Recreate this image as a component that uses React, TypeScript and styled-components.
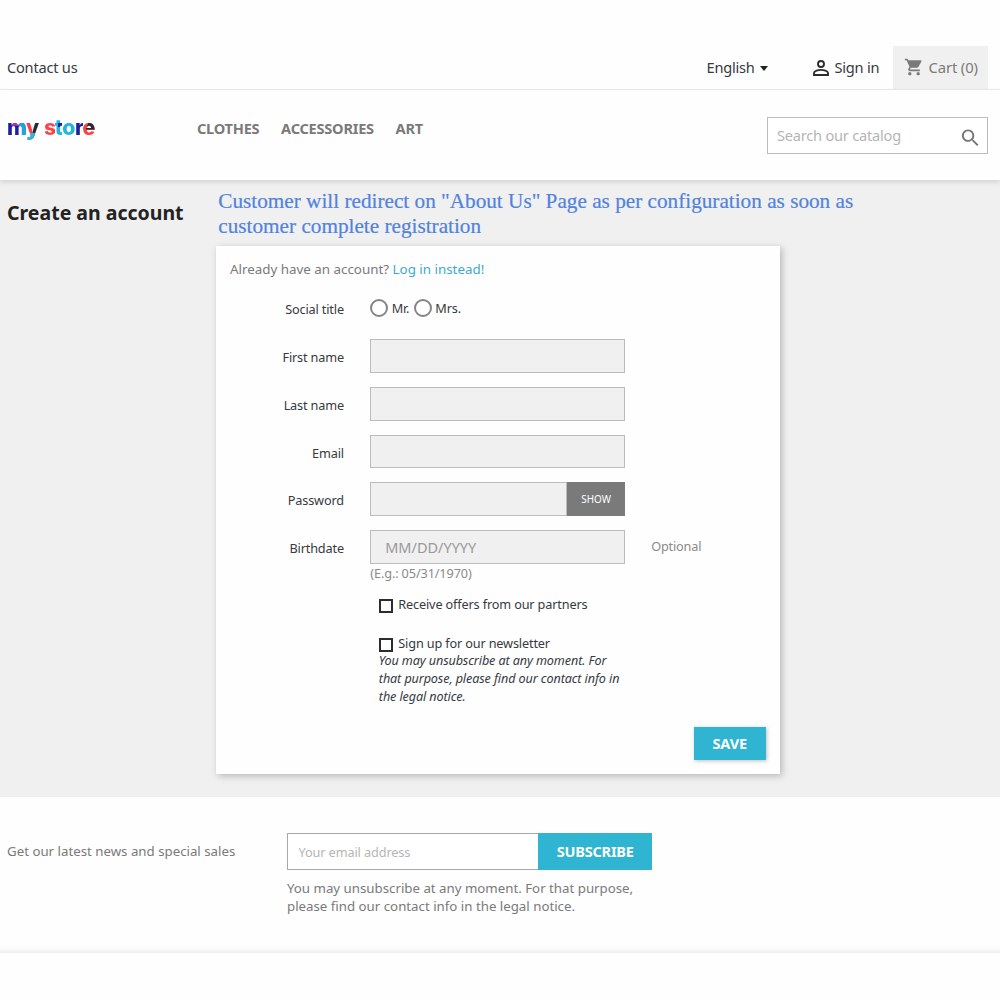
import React from 'react';
import styled, { createGlobalStyle } from 'styled-components';

const Global = createGlobalStyle`
  *, *::before, *::after { box-sizing: border-box; }
  body { margin: 0; background: #fff; font-family: "Noto Sans", "Open Sans", sans-serif; color: #363a41; }
  input, button { font-family: inherit; margin: 0; border-radius: 0; outline: none; }
`;

const Page = styled.div`
  height: 1000px;
  overflow: hidden;
  padding-top: 46px;
  background: #fefefe;
`;

const NavBar = styled.nav`
  display: flex;
  align-items: stretch;
  height: 44px;
  padding: 0 12px 0 7px;
  border-bottom: 1px solid #ebebeb;
  font-size: 14.6px;
  letter-spacing: -0.22px;
  line-height: 43px;
`;

const ContactLink = styled.a`
  flex: 1;
`;

const Language = styled.div`
  display: flex;
  align-items: center;
  gap: 5px;
  width: 106px;
`;

const Caret = styled.span`
  border: 4.5px solid transparent;
  border-top: 5px solid #232323;
  border-bottom: 0;
  margin-top: 2px;
`;

const SignIn = styled.a`
  display: flex;
  align-items: center;
  gap: 6px;
  width: 80.5px;
`;

const Cart = styled.div`
  display: flex;
  align-items: center;
  gap: 4.5px;
  width: 95px;
  padding: 0 0 1px 11px;
  background: #f0f0f0;
  color: #7a7a7a;
  font-size: 14.8px;
  letter-spacing: -0.12px;
`;

const Header = styled.header`
  position: relative;
  display: flex;
  height: 90px;
  padding: 27px 12px 0 7px;
  background: #fefefe;
  box-shadow: 0 2px 5px rgba(0, 0, 0, 0.13);
`;

const Logo = styled.a`
  display: flex;
  width: 190px;
  height: 32px;
  margin-top: -6px;
  font-family: Inter, sans-serif;
  font-weight: 800;
  font-size: 21.3px;
  line-height: 33px;
`;

const LogoLetter = styled.span<{ $w: number; $fill: string }>`
  width: ${p => p.$w}px;
  background: ${p => p.$fill};
  background-clip: text;
  -webkit-background-clip: text;
  color: transparent;
`;

const Menu = styled.div`
  display: flex;
  flex: 1;
  gap: 21.7px;
  color: #7a7a7a;
  font-size: 14.6px;
  font-weight: 700;
  letter-spacing: -0.25px;
  line-height: 22px;
`;

const SearchBox = styled.div`
  display: flex;
  align-items: center;
  justify-content: space-between;
  width: 221px;
  height: 37px;
  padding: 0 8px 0 9px;
  border: 1px solid #bdbdbd;
  background: #fff;

  svg { margin-top: 4px; }
`;

const SearchInput = styled.input`
  width: 160px;
  margin-top: -2px;
  padding: 0;
  border: 0;
  background: transparent;
  font-size: 14.6px;
  letter-spacing: -0.22px;
  line-height: 20px;
  &::placeholder { color: #b5b5b5; opacity: 1; }
`;

const Main = styled.main`
  display: flex;
  height: 617px;
  padding: 8px 7px 0;
  background: #f0f0f0;
`;

const Title = styled.h1`
  width: 208.5px;
  margin: 12px 0 0;
  color: #232323;
  font-size: 19.5px;
  font-weight: 700;
  line-height: 26px;
  white-space: nowrap;
`;

const Content = styled.section`
  width: 660px;
`;

const Notice = styled.p`
  margin: 1px 0 6.6px;
  padding-left: 2.8px;
  color: #5082de;
  -webkit-text-stroke: 0.2px #5082de;
  font-family: "Liberation Serif", serif;
  font-size: 21.22px;
  line-height: 25px;
  white-space: nowrap;
`;

const Card = styled.form`
  display: flex;
  flex-direction: column;
  width: 564.7px;
  height: 528.8px;
  padding: 13.8px 14.5px 14px;
  background: #fefefe;
  box-shadow: 2px 2px 7px rgba(0, 0, 0, 0.24);
`;

const LoginLine = styled.p`
  margin: 0 0 12px;
  color: #7a7a7a;
  font-size: 13.37px;
  line-height: 20px;
  a { color: #3fabca; }
`;

const Row = styled.div`
  display: grid;
  grid-template-columns: 113.9px 254.7px 1fr;
  column-gap: 26.3px;
  height: 33.75px;
  margin-bottom: 14px;
  font-size: 12.7px;
  letter-spacing: -0.16px;
  line-height: 36px;
`;

const Label = styled.label`
  color: #363a41;
  text-align: right;
`;

const Field = styled.div`
  display: flex;
  height: 33.75px;
`;

const Input = styled.input`
  flex: 1;
  min-width: 0;
  padding: 0 14px;
  border: 1px solid #bbb;
  background: #f0f0f0;
  font-size: 14.5px;
  &::placeholder { color: #999; opacity: 1; }
`;

const ShowButton = styled.button`
  width: 57.5px;
  padding: 0 0 1px;
  border: 0;
  background: #7a7a7a;
  color: #fff;
  font-size: 9.9px;
`;

const Remark = styled.span`
  color: #8a8a8a;
  line-height: 32px;
`;

const Hint = styled.div`
  margin: -14.400px 0 0 140.300px;
  color: #8a8a8a;
  font-size: 12.7px;
  letter-spacing: -0.12px;
  line-height: 18px;
`;

const Radios = styled.div`
  display: flex;
  height: 33.75px;
  gap: 4.5px;
`;

const RadioLabel = styled.label`
  display: flex;
  align-items: center;
  gap: 3.5px;
  line-height: 32px;
  span { margin-top: -1px; }
`;

const Circle = styled.i`
  width: 18px;
  height: 18px;
  border: 2px solid #858585;
  border-radius: 50%;
  background: #fff;
`;

const Option = styled.label<{ $top: number }>`
  display: flex;
  gap: 5.5px;
  margin: ${p => p.$top}px 0 0 148.8px;
  font-size: 12.7px;
  letter-spacing: -0.15px;
  line-height: 18px;
`;

const Box = styled.i`
  width: 14px;
  height: 14px;
  margin-top: 3.500px;
  border: 2px solid #2c2c2c;
  background: #fff;
`;

const Small = styled.em`
  width: 260px;
  margin-left: 148.8px;
  font-size: 12.6px;
  letter-spacing: -0.1px;
  line-height: 17.7px;
`;

const SaveButton = styled.button`
  align-self: flex-end;
  width: 72px;
  height: 33.500px;
  margin-top: auto;
  padding: 0 0 1px;
  border: 0;
  background: #2fb5d2;
  box-shadow: 1px 1px 4px rgba(0, 0, 0, 0.25);
  color: #fff;
  font-size: 14.5px;
  font-weight: 700;
  letter-spacing: -0.15px;
`;

const Newsletter = styled.footer`
  display: grid;
  grid-template-columns: 280px 380px;
  height: 156px;
  padding: 36px 7px 0;
  background: linear-gradient(#fefefe calc(100% - 9px), #fafafa calc(100% - 4px), #eeeeee);
  color: #7a7a7a;
  font-size: 13.27px;
  line-height: 18px;
`;

const NewsTitle = styled.p`
  margin: 8.6px 0 0;
`;

const SubscribeRow = styled.div`
  display: flex;
  width: 365.4px;
  height: 37px;
`;

const EmailInput = styled.input`
  flex: 1;
  min-width: 0;
  padding: 1px 10.5px 0;
  border: 1px solid #a8a8a8;
  border-right: 0;
  background: #fff;
  font-size: 12.7px;
  letter-spacing: -0.1px;
  &::placeholder { color: #b5b5b5; opacity: 1; }
`;

const SubscribeButton = styled.button`
  width: 114.4px;
  padding: 0 0 2px;
  border: 0;
  background: #2fb5d2;
  color: #fff;
  font-size: 14.5px;
  font-weight: 700;
  letter-spacing: -0.2px;
`;

const NewsText = styled.p`
  margin: 9px 0 0;
  line-height: 18px;
`;

const letters: [string, number, string][] = [
  ['m', 19, 'linear-gradient(90deg, rgba(0,0,0,0) 62%, #18a9dc 62%), linear-gradient(90deg, rgba(0,0,0,0) 28%, #c22bc0 28%) 0 0 / 100% 46% no-repeat, #1b1fa0'],
  ['y', 18, 'linear-gradient(#25b9e0, #25b9e0) 0 100% / 100% 32% no-repeat, linear-gradient(90deg, #f6414b 38%, #252a33 38%)'],
  ['s', 10.8, '#fb4347'],
  ['t', 7.4, 'linear-gradient(90deg, rgba(0,0,0,0) 50%, #1b1fa0 50%) 0 12px / 100% 4px no-repeat, #22b5e0'],
  ['o', 12.8, '#22b5e0'],
  ['r', 7.6, '#1b1fa0'],
  ['e', 13.4, 'linear-gradient(115deg, #fb4347 52%, #252a33 52%) 0 0 / 100% 58% no-repeat, #fb4347'],
];

const menu = ['CLOTHES', 'ACCESSORIES', 'ART'];

export default function App() {
  return (
    <Page>
      <Global />
      <NavBar>
        <ContactLink>Contact us</ContactLink>
        <Language>English<Caret /></Language>
        <SignIn>
          <svg width="16" height="16" viewBox="4 4 16 16" fill="none" stroke="#2c2c2c" strokeWidth="1.9">
            <circle cx="12" cy="8" r="3" />
            <path d="M5 19v-2c0-2 4.400-3.100 7-3.100s7 1.100 7 3.100v2z" />
          </svg>
          Sign in
        </SignIn>
        <Cart>
          <svg width="20" height="20" viewBox="0 1 24 22" fill="#7a7a7a">
            <path d="M7 18c-1.100 0-1.990.9-1.990 2S5.900 22 7 22s2-.9 2-2-.9-2-2-2zM1 2v2h2l3.600 7.590-1.350 2.450c-.16.280-.25.610-.25.960 0 1.100.9 2 2 2h12v-2H7.420c-.14 0-.25-.11-.25-.25l.03-.12.900-1.630h7.450c.75 0 1.410-.41 1.750-1.030l3.580-6.490c.08-.14.120-.31.120-.48 0-.55-.45-1-1-1H5.210l-.94-2H1zm16 16c-1.100 0-1.990.9-1.990 2s.89 2 1.990 2 2-.9 2-2-.9-2-2-2z" />
          </svg>
          Cart (0)
        </Cart>
      </NavBar>
      <Header>
        <Logo>
          {letters.map(([ch, w, fill]) => <LogoLetter key={ch} $w={w} $fill={fill}>{ch}</LogoLetter>)}
        </Logo>
        <Menu>{menu.map(m => <span key={m}>{m}</span>)}</Menu>
        <SearchBox>
          <SearchInput placeholder="Search our catalog" />
          <svg width="18" height="18" viewBox="2 2.500 19 19" fill="#757575">
            <path d="M15.500 14h-.79l-.28-.27C15.410 12.590 16 11.110 16 9.500 16 5.910 13.090 3 9.500 3S3 5.910 3 9.500 5.910 16 9.500 16c1.610 0 3.090-.59 4.230-1.570l.27.280v.79l5 4.990L20.490 19l-4.990-5zm-6 0C7.010 14 5 11.990 5 9.500S7.010 5 9.500 5 14 7.010 14 9.500 11.990 14 9.500 14z" />
          </svg>
        </SearchBox>
      </Header>
      <Main>
        <Title>Create an account</Title>
        <Content>
          <Notice>
            Customer will redirect on "About Us" Page as per configuration as soon as<br />
            customer complete registration
          </Notice>
          <Card>
            <LoginLine>Already have an account? <a>Log in instead!</a></LoginLine>
            <Row>
              <Label>Social title</Label>
              <Radios>
                <RadioLabel><Circle /><span>Mr.</span></RadioLabel>
                <RadioLabel><Circle /><span>Mrs.</span></RadioLabel>
              </Radios>
            </Row>
            {['First name', 'Last name', 'Email'].map(l => (
              <Row key={l}><Label>{l}</Label><Field><Input /></Field></Row>
            ))}
            <Row>
              <Label>Password</Label>
              <Field><Input type="password" /><ShowButton type="button">SHOW</ShowButton></Field>
            </Row>
            <Row>
              <Label>Birthdate</Label>
              <Field><Input placeholder="MM/DD/YYYY" /></Field>
              <Remark>Optional</Remark>
            </Row>
            <Hint>(E.g.: 05/31/1970)</Hint>
            <Option $top={13.6}><Box /><span>Receive offers from our partners</span></Option>
            <Option $top={21}><Box /><span>Sign up for our newsletter</span></Option>
            <Small>
              You may unsubscribe at any moment. For<br />
              that purpose, please find our contact info in<br />
              the legal notice.
            </Small>
            <SaveButton type="button">SAVE</SaveButton>
          </Card>
        </Content>
      </Main>
      <Newsletter>
        <NewsTitle>Get our latest news and special sales</NewsTitle>
        <div>
          <SubscribeRow>
            <EmailInput placeholder="Your email address" />
            <SubscribeButton type="button">SUBSCRIBE</SubscribeButton>
          </SubscribeRow>
          <NewsText>
            You may unsubscribe at any moment. For that purpose,<br />
            please find our contact info in the legal notice.
          </NewsText>
        </div>
      </Newsletter>
    </Page>
  );
}
